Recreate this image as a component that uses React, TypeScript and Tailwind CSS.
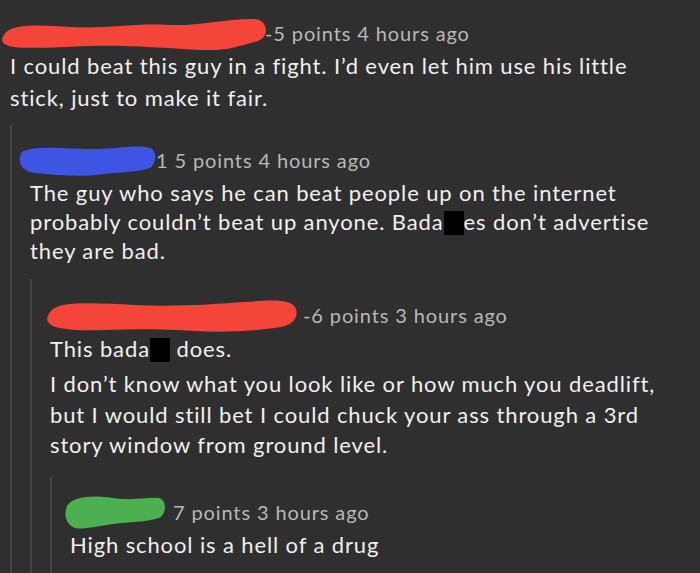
import React from 'react';

type Blob = { w: number; h: number; color: string; d: string };

// scribbled-out usernames
const redLong: Blob = {
  w: 268,
  h: 36,
  color: '#f4453a',
  d: 'M4 20 C10 8 40 10 70 12 C110 14 130 8 170 10 C200 11 230 3 255 4 C268 5 270 22 258 26 C240 30 232 36 200 35 C160 33 130 30 90 31 C60 32 30 34 14 32 C2 30 0 26 4 20 Z',
};

const blue: Blob = {
  w: 140,
  h: 36,
  color: '#3e55e3',
  d: 'M6 10 C16 4 40 6 70 7 C100 8 118 2 134 6 C142 9 140 22 134 26 C120 31 100 30 80 33 C60 35 40 33 20 31 C6 30 0 20 6 10 Z',
};

const redMid: Blob = {
  w: 254,
  h: 40,
  color: '#f4453a',
  d: 'M6 16 C14 6 50 8 90 10 C130 12 170 9 200 7 C225 5 245 4 250 12 C255 22 248 30 236 32 C210 36 180 38 150 36 C120 34 90 34 60 35 C30 36 12 34 6 30 C0 26 2 20 6 16 Z',
};

const green: Blob = {
  w: 104,
  h: 40,
  color: '#4caf50',
  d: 'M4 14 C10 4 30 3 50 6 C70 9 84 5 96 6 C104 8 104 22 96 26 C84 30 66 30 50 32 C34 34 20 38 12 36 C4 33 0 24 4 14 Z',
};

function Scribble({ blob, className }: { blob: Blob; className?: string }) {
  return (
    <svg width={blob.w} height={blob.h} viewBox={`0 0 ${blob.w} ${blob.h}`} className={className}>
      <path d={blob.d} fill={blob.color} />
    </svg>
  );
}

function Censor() {
  return <span className="inline-block w-[20px] h-[24px] bg-black align-[-5px]" />;
}

export default function App() {
  return (
    <div
      className="w-[700px] h-[573px] overflow-hidden bg-[#2f2f2f] text-[#f0f0f0] px-[10px] tracking-[0.055em]"
      style={{ fontFamily: 'Lato, "Noto Sans", sans-serif' }}
    >
      {/* top comment */}
      <div className="pt-[16px]">
        <div className="flex items-center h-[34px] -ml-[10px]">
          <Scribble blob={redLong} className="shrink-0 -mr-[3px]" />
          <span className="text-[20px] text-[#b8b8b8]">-5 points 4 hours ago</span>
        </div>
        <p className="text-[22px] leading-[32px] mt-[0px]">
          I could beat this guy in a fight. I’d even let him use his little
          <br />
          stick, just to make it fair.
        </p>

        {/* reply */}
        <div className="mt-[11px] border-l-2 border-[#444] pl-[18px] pt-[18px]">
          <div className="flex items-center h-[34px] -ml-[14px]">
            <Scribble blob={blue} className="shrink-0" />
            <span className="text-[20px] text-[#b8b8b8]">1 5 points 4 hours ago</span>
          </div>
          <p className="text-[22px] leading-[29px] mt-[1px]">
            The guy who says he can beat people up on the internet
            <br />
            probably couldn’t beat up anyone. Bada<Censor />es don’t advertise
            <br />
            they are bad.
          </p>

          {/* reply to reply */}
          <div className="mt-[14px] border-l-2 border-[#444] pl-[18px] pt-[17px]">
            <div className="flex items-center h-[38px] -ml-[5px]">
              <Scribble blob={redMid} className="shrink-0 mr-[4px]" />
              <span className="text-[20px] text-[#b8b8b8]">-6 points 3 hours ago</span>
            </div>
            <p className="text-[22px] leading-[30px] mt-[0px]">
              This bada<Censor /> does.
            </p>
            <p className="text-[22px] leading-[30.5px] mt-[5px]">
              I don’t know what you look like or how much you deadlift,
              <br />
              but I would still bet I could chuck your ass through a 3rd
              <br />
              story window from ground level.
            </p>

            {/* last reply */}
            <div className="mt-[16px] border-l-2 border-[#444] pl-[18px] pt-[15px] pb-[40px]">
              <div className="flex items-center h-[40px] -ml-[7px]">
                <Scribble blob={green} className="shrink-0 mr-[6px]" />
                <span className="text-[20px] text-[#b8b8b8]">7 points 3 hours ago</span>
              </div>
              <p className="text-[22px] leading-[30px] -mt-[2px]">High school is a hell of a drug</p>
            </div>
          </div>
        </div>
      </div>
    </div>
  );
}
